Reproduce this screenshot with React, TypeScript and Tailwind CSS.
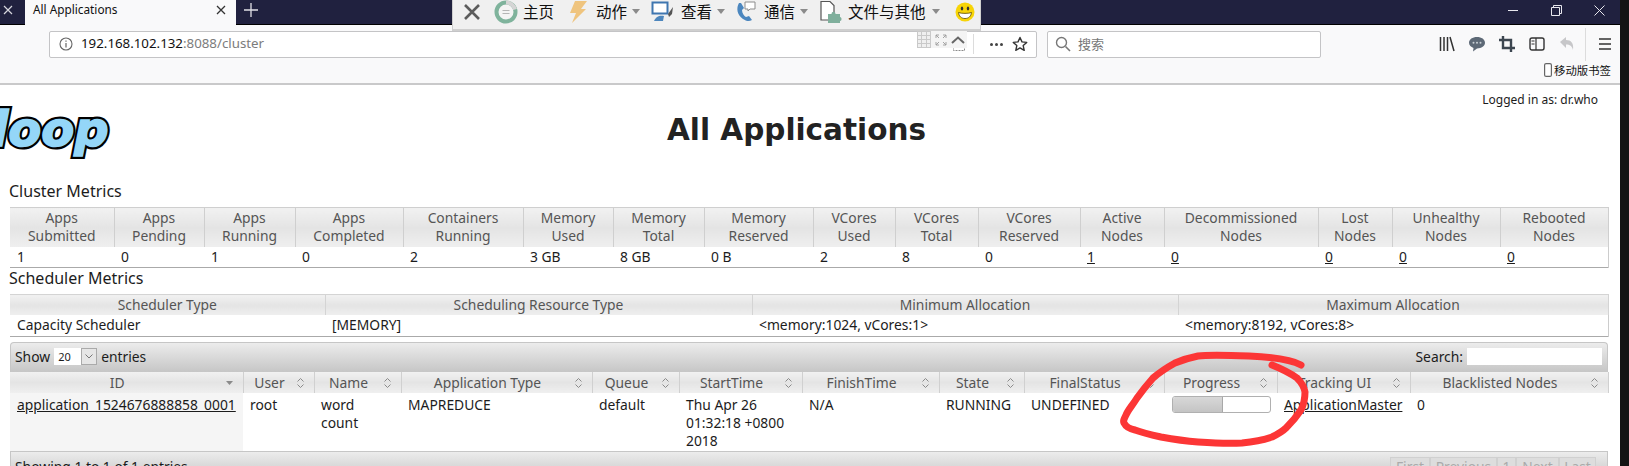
import React from "react";

const clusterCols = [
  ["Apps", "Submitted", "1", "w-[104px]"],
  ["Apps", "Pending", "0", "w-[90px]"],
  ["Apps", "Running", "1", "w-[91px]"],
  ["Apps", "Completed", "0", "w-[108px]"],
  ["Containers", "Running", "2", "w-[120px]"],
  ["Memory", "Used", "3 GB", "w-[90px]"],
  ["Memory", "Total", "8 GB", "w-[91px]"],
  ["Memory", "Reserved", "0 B", "w-[109px]"],
  ["VCores", "Used", "2", "w-[82px]"],
  ["VCores", "Total", "8", "w-[83px]"],
  ["VCores", "Reserved", "0", "w-[102px]"],
  ["Active", "Nodes", "1", "w-[84px]", "u"],
  ["Decommissioned", "Nodes", "0", "w-[154px]", "u"],
  ["Lost", "Nodes", "0", "w-[74px]", "u"],
  ["Unhealthy", "Nodes", "0", "w-[108px]", "u"],
  ["Rebooted", "Nodes", "0", "w-[108px]", "u"],
];

const schedCols = [
  ["Scheduler Type", "Capacity Scheduler", "w-[315px]"],
  ["Scheduling Resource Type", "[MEMORY]", "w-[427px]"],
  ["Minimum Allocation", "<memory:1024, vCores:1>", "w-[426px]"],
  ["Maximum Allocation", "<memory:8192, vCores:8>", "w-[430px]"],
];

const appCols = [
  ["ID", "w-[233px]"],
  ["User", "w-[71px]"],
  ["Name", "w-[87px]"],
  ["Application Type", "w-[191px]"],
  ["Queue", "w-[87px]"],
  ["StartTime", "w-[123px]"],
  ["FinishTime", "w-[137px]"],
  ["State", "w-[85px]"],
  ["FinalStatus", "w-[140px]"],
  ["Progress", "w-[113px]"],
  ["Tracking UI", "w-[133px]"],
  ["Blacklisted Nodes", "w-[198px]"],
];

const thBg = "bg-linear-to-b from-[#f1f1f1] via-[#e4e4e4] to-[#efefef]";

function Sort({ down }: { down?: boolean }) {
  if (down)
    return (
      <svg width="9" height="6" viewBox="0 0 9 6" className="shrink-0">
        <path d="M1 1h7L4.500 5z" fill="#8a8a8a" />
      </svg>
    );
  return (
    <svg width="9" height="12" viewBox="0 0 9 12" className="shrink-0">
      <path d="M1.500 4.500L4.500 1.500l3 3M1.500 7.500l3 3 3-3" fill="none" stroke="#8a8a8a" strokeWidth="1" />
    </svg>
  );
}

function Caret() {
  return (
    <svg width="8" height="5" viewBox="0 0 8 5" className="shrink-0">
      <path d="M0 0h8L4 5z" fill="#8b8b8b" />
    </svg>
  );
}

function TopToolbar() {
  return (
    <div className="absolute left-[452px] top-0 flex h-[31px] w-[529px] items-center border-b-2 border-l border-r border-[#cfcfcf] bg-[#f0f0f0] pb-[6px] font-['Noto_Sans_CJK_SC',sans-serif] text-[15.5px] text-[#111]">
      <svg width="20" height="20" viewBox="0 0 20 20" className="ml-[9px]">
        <path d="M3 3l14 14M17 3L3 17" stroke="#5c5c5c" strokeWidth="2.6" />
      </svg>
      <svg width="24" height="24" viewBox="0 0 24 24" className="ml-[12px]">
        <circle cx="12" cy="12" r="9.500" fill="#f4f4f4" stroke="#7fb39c" strokeWidth="4" />
        <path d="M12 2.500a9.500 9.500 0 0 1 9 7" fill="none" stroke="#d5d5d5" strokeWidth="4" />
        <path d="M8.500 10.500h7M8.500 13.500h7" stroke="#b5b5b5" strokeWidth="1" />
      </svg>
      <span className="ml-[5px] w-[32px]">主页</span>
      <svg width="20" height="24" viewBox="0 0 20 24" className="ml-[13px]">
        <path d="M7 1h12l-6 8h5L4 23l4-10H2z" fill="#efc47e" />
      </svg>
      <span className="ml-[8px] w-[32px]">动作</span>
      <span className="ml-[4px]"><Caret /></span>
      <svg width="24" height="22" viewBox="0 0 24 22" className="ml-[11px]">
        <rect x="1.500" y="1.500" width="15" height="11" fill="#fff" stroke="#3f76b0" strokeWidth="2" />
        <path d="M3 20c2-5 6-6 10-5l-1 5z" fill="#4d86bd" />
        <path d="M17 13l5-7-1 7-3 3z" fill="#555" />
      </svg>
      <span className="ml-[6px] w-[32px]">查看</span>
      <span className="ml-[4px]"><Caret /></span>
      <svg width="24" height="24" viewBox="0 0 24 24" className="ml-[9px]">
        <path d="M5 3c-3 5-2 12 4 16 3 2 6 3 9 1l-3-4-3 1c-2-1-4-4-4-7l2-2-3-5z" fill="#4c87bf" />
        <path d="M11 2h10v7h-5l-2 2V9h-3z" fill="#fff" stroke="#8c8c8c" />
      </svg>
      <span className="ml-[6px] w-[32px]">通信</span>
      <span className="ml-[4px]"><Caret /></span>
      <svg width="24" height="24" viewBox="0 0 24 24" className="ml-[11px]">
        <path d="M2 1.500h9l4 4V20H2z" fill="#fff" stroke="#555" strokeWidth="1.2" />
        <path d="M9 14h3.500c0-3 4-3 4 0H21v3c2 0 2 4 0 4v2H9z" fill="#7faf9c" />
      </svg>
      <span className="ml-[5px] w-[80px]">文件与其他</span>
      <span className="ml-[4px]"><Caret /></span>
      <svg width="20" height="20" viewBox="0 0 20 20" className="ml-[15px]">
        <circle cx="10" cy="10" r="9.500" fill="#f7d407" />
        <ellipse cx="7" cy="6.500" rx="1.200" ry="2" fill="#333" />
        <ellipse cx="13" cy="6.500" rx="1.200" ry="2" fill="#333" />
        <path d="M3.500 10.500c3 1.200 10 1.200 13 0-.5 4-3 6-6.500 6s-6-2-6.500-6z" fill="#fff" stroke="#5a4a00" strokeWidth="0.8" />
      </svg>
    </div>
  );
}

function MiniBar() {
  return (
    <div className="absolute left-[917px] top-[31px] flex h-[17px] w-[50px] items-center bg-[#f4f4f4]">
      <div className="grid h-[17px] w-[14px] grid-cols-3 gap-[1px] bg-[#c9c9c9] p-[1px]">
        {Array.from({ length: 12 }).map((_, i) => (
          <div key={i} className="bg-[#efefef]" />
        ))}
      </div>
      <svg width="12" height="12" viewBox="0 0 12 12" className="ml-[4px]">
        <path d="M1 4V1h3M8 1h3v3M11 8v3H8M4 11H1V8M1 1l3 3M11 1L8 4M11 11L8 8M1 11l3-3" fill="none" stroke="#9a9a9a" strokeWidth="0.9" />
      </svg>
      <svg width="14" height="8" viewBox="0 0 14 8" className="ml-[4px]">
        <path d="M1 7l6-5.500L13 7" fill="none" stroke="#666" strokeWidth="2" />
      </svg>
    </div>
  );
}

function Chrome() {
  return (
    <>
      <div className="flex h-[25px] shrink-0 items-center border-b border-black bg-[#20213f] pb-[4px] font-['Noto_Sans',sans-serif] text-[#e8e8ee]">
        <svg width="10" height="10" viewBox="0 0 10 10" className="ml-[3px]">
          <path d="M1 1l8 8M9 1L1 9" stroke="#d6d6dd" strokeWidth="1.2" />
        </svg>
        <div className="-mb-[4px] ml-[12px] flex h-[25px] w-[211px] items-center bg-[#f9f9fa] pb-[4px] pl-[8px] text-[11.8px] text-[#111]">
          <span>All Applications</span>
          <svg width="10" height="10" viewBox="0 0 10 10" className="ml-auto mr-[10px]">
            <path d="M1 1l8 8M9 1L1 9" stroke="#333" strokeWidth="1.3" />
          </svg>
        </div>
        <svg width="14" height="14" viewBox="0 0 14 14" className="ml-[8px]">
          <path d="M7 0v14M0 7h14" stroke="#e0e0e6" strokeWidth="1.3" />
        </svg>
        <div className="ml-auto flex items-center">
          <svg width="10" height="10" viewBox="0 0 10 10">
            <path d="M0 5.500h10" stroke="#e8e8ee" />
          </svg>
          <svg width="11" height="11" viewBox="0 0 11 11" className="ml-[33px]">
            <path d="M.5 2.500h8v8h-8zM2.500 2.500V.5h8v8h-2" fill="none" stroke="#e8e8ee" />
          </svg>
          <svg width="11" height="11" viewBox="0 0 11 11" className="ml-[32px] mr-[15px]">
            <path d="M.5.5l10 10M10.500.5l-10 10" stroke="#e8e8ee" />
          </svg>
        </div>
      </div>
      <div className="flex h-[60px] shrink-0 flex-col border-b-2 border-[#c9c9ca] bg-[#f9f9fa]">
        <div className="flex h-[37px] items-center pt-[1px]">
          <div className="ml-[49px] flex h-[27px] w-[988px] items-center rounded-[2px] border border-[#c4c4c6] bg-white font-['Noto_Sans',sans-serif] text-[13.3px]">
            <svg width="14" height="14" viewBox="0 0 14 14" className="ml-[9px]">
              <circle cx="7" cy="7" r="6" fill="none" stroke="#666" strokeWidth="1.1" />
              <path d="M7 6v4.500M7 3.400v1.400" stroke="#666" strokeWidth="1.2" />
            </svg>
            <span className="ml-[8px] text-[#111]">192.168.102.132</span>
            <span className="text-[#7c7c7c]">:8088/cluster</span>
            <div className="ml-auto mr-[8px] flex items-center">
              <svg width="12" height="13" viewBox="0 0 12 13" className="mr-[8px]">
                <path d="M.5.5h11v12H.5z" fill="none" stroke="#8a8a8a" strokeDasharray="2 1" />
              </svg>
              <div className="mr-[16px] h-[20px] w-[1px] bg-[#dcdcdc]" />
              <span className="flex gap-[2px]">
                <span className="h-[3px] w-[3px] rounded-full bg-[#444]" />
                <span className="h-[3px] w-[3px] rounded-full bg-[#444]" />
                <span className="h-[3px] w-[3px] rounded-full bg-[#444]" />
              </span>
              <svg width="16" height="16" viewBox="0 0 16 16" className="ml-[9px]">
                <path d="M8 1.500l2 4.400 4.700.5-3.500 3.200 1 4.700L8 11.900l-4.200 2.400 1-4.700L1.300 6.400 6 5.900z" fill="none" stroke="#333" strokeWidth="1.4" strokeLinejoin="round" />
              </svg>
            </div>
          </div>
          <div className="ml-[10px] flex h-[27px] w-[274px] items-center rounded-[2px] border border-[#c4c4c6] bg-white font-['Noto_Sans_CJK_SC',sans-serif] text-[13px] text-[#777]">
            <svg width="16" height="16" viewBox="0 0 16 16" className="ml-[7px]">
              <circle cx="6.500" cy="6.500" r="5" fill="none" stroke="#777" strokeWidth="1.4" />
              <path d="M10.500 10.500L15 15" stroke="#777" strokeWidth="1.6" />
            </svg>
            <span className="ml-[7px]">搜索</span>
          </div>
          <svg width="16" height="16" viewBox="0 0 16 16" className="ml-[118px]">
            <path d="M1.500 1v14M5 1v14M8.500 1v14M11 1l4 14" stroke="#333" strokeWidth="1.5" fill="none" />
          </svg>
          <svg width="18" height="16" viewBox="0 0 18 16" className="ml-[13px]">
            <path d="M9 1c4.500 0 8 2.400 8 5.700s-3.500 5.700-8 5.700l-4 3 .5-3.500C3 11 1 9 1 6.700 1 3.400 4.500 1 9 1z" fill="#5d6976" />
            <circle cx="5.500" cy="6.700" r="1" fill="#c8ced4" />
            <circle cx="9" cy="6.700" r="1" fill="#c8ced4" />
            <circle cx="12.500" cy="6.700" r="1" fill="#c8ced4" />
          </svg>
          <svg width="16" height="16" viewBox="0 0 16 16" className="ml-[13px]">
            <path d="M4 0v12h12M0 4h12v12" fill="none" stroke="#3c4650" strokeWidth="2.4" />
          </svg>
          <svg width="16" height="16" viewBox="0 0 16 16" className="ml-[14px]">
            <rect x="1" y="2" width="14" height="12" rx="2" fill="none" stroke="#333" strokeWidth="1.4" />
            <path d="M7 2v12M2.500 5h3M2.500 8h3" stroke="#333" strokeWidth="1.2" />
          </svg>
          <svg width="16" height="16" viewBox="0 0 16 16" className="ml-[14px]">
            <path d="M1 6l6-5v3c5 0 8 3 7 10-1-4-3-5.500-7-5.500V12z" fill="#c7c7c9" />
          </svg>
          <div className="ml-[10px] h-[33px] w-[1px] bg-[#dcdcdc]" />
          <svg width="14" height="14" viewBox="0 0 14 14" className="ml-[12px]">
            <path d="M1 2h12M1 7h12M1 12h12" stroke="#333" strokeWidth="1.6" />
          </svg>
        </div>
        <div className="flex flex-1 items-start justify-end pr-[9px] font-['Noto_Sans_CJK_SC',sans-serif] text-[11.4px] leading-[17px] text-[#111]">
          <svg width="8" height="14" viewBox="0 0 8 14" className="mr-[2px] mt-[1px]">
            <rect x=".6" y=".6" width="6.800" height="12.800" rx="1.500" fill="#fff" stroke="#666" strokeWidth="1.2" />
          </svg>
          <span>移动版书签</span>
        </div>
      </div>
    </>
  );
}

function Page() {
  return (
    <div className="flex-1 overflow-hidden bg-white font-['Noto_Sans',sans-serif] text-[13.850px] leading-[18px] text-[#1c1c1c]">
      <div className="flex h-[97px] items-start">
        <svg width="114" height="80" viewBox="0 0 114 80" className="shrink-0">
          <g fontFamily="'DejaVu Sans', sans-serif" fontWeight="bold" fontStyle="italic" fontSize="48">
            <text x="-26" y="61" fill="#000" stroke="#000" strokeWidth="6" strokeLinejoin="miter">
              doop
            </text>
            <text x="-26" y="61" fill="#94d6f8" stroke="#94d6f8" strokeWidth="1.6" strokeLinejoin="miter">
              doop
            </text>
          </g>
        </svg>
        <h1 className="ml-[553px] mt-[25px] font-['DejaVu_Sans',sans-serif] text-[29.500px] font-bold leading-[40px] text-[#222]">
          All Applications
        </h1>
        <span className="ml-auto mr-[22px] mt-[6px] text-[12px] leading-[18px]">Logged in as: dr.who</span>
      </div>
      <div className="px-[10px]">
        <h3 className="-ml-[1px] h-[25px] text-[16px] leading-[19px]">Cluster Metrics</h3>
        <table className="w-[1598px] table-fixed border-collapse border-b border-[#aaa]">
          <thead>
            <tr className="h-[39px]">
              {clusterCols.map((c, i) => (
                <th key={i} className={`${c[3]} ${thBg} border-r border-t border-[#cfcfcf] p-0 text-center font-normal text-[#555]`}>
                  {c[0]}
                  <br />
                  {c[1]}
                </th>
              ))}
            </tr>
          </thead>
          <tbody>
            <tr className="h-[21px]">
              {clusterCols.map((c, i) => (
                <td key={i} className={`px-[7px] py-0 ${i === 15 ? "border-r border-[#ccc]" : ""} ${c[4] ? "underline" : ""}`}>
                  {c[2]}
                </td>
              ))}
            </tr>
          </tbody>
        </table>
        <h3 className="-ml-[1px] h-[26px] text-[16px] leading-[20px]">Scheduler Metrics</h3>
        <table className="w-[1598px] table-fixed border-collapse border-b border-[#aaa]">
          <thead>
            <tr className="h-[20px]">
              {schedCols.map((c, i) => (
                <th key={i} className={`${c[2]} ${thBg} border-r border-t border-[#d4d4d4] p-0 text-center font-normal text-[#555]`}>
                  {c[0]}
                </th>
              ))}
            </tr>
          </thead>
          <tbody>
            <tr className="h-[22px]">
              {schedCols.map((c, i) => (
                <td key={i} className={`px-[7px] py-0 ${i === 3 ? "border-r border-[#ccc]" : ""}`}>
                  {c[1]}
                </td>
              ))}
            </tr>
          </tbody>
        </table>
        <div className="mt-[5px] w-[1598px]">
          <div className="flex h-[30px] items-center rounded-t-[4px] border border-b-0 border-[#c6c6c6] bg-linear-to-b from-[#ececec] to-[#c6c6c6] pb-[2px] pl-[4px] pr-[5px]">
            <span>Show</span>
            <div className="ml-[4px] flex h-[17px] w-[43px] bg-white text-[11px] leading-[17px]">
              <span className="w-[27px] pl-[4px]">20</span>
              <span className="flex w-[16px] items-center justify-center border border-[#aaa] bg-[#e6e6e6]">
                <svg width="8" height="5" viewBox="0 0 8 5">
                  <path d="M.5.5L4 4 7.500.5" fill="none" stroke="#777" />
                </svg>
              </span>
            </div>
            <span className="ml-[4px]">entries</span>
            <span className="ml-auto">Search:</span>
            <div className="ml-[4px] h-[17px] w-[135px] bg-white" />
          </div>
          <table className="w-[1598px] table-fixed border-collapse">
            <thead>
              <tr className="h-[21px]">
                {appCols.map((c, i) => (
                  <th key={i} className={`${c[1]} ${thBg} border-r border-[#d0d0d0] p-0 font-normal text-[#555]`}>
                    <div className="flex items-center pr-[9px]">
                      <span className="flex-1 text-center">{c[0]}</span>
                      <Sort down={i === 0} />
                    </div>
                  </th>
                ))}
              </tr>
            </thead>
            <tbody>
              <tr className="h-[58px] align-top">
                <td className="bg-[#f5f5f5] px-[7px] pb-0 pt-[3px]">
                  <span className="underline">application_1524676888858_0001</span>
                </td>
                <td className="px-[7px] pb-0 pt-[3px]">root</td>
                <td className="px-[7px] pb-0 pt-[3px]">
                  word
                  <br />
                  count
                </td>
                <td className="px-[7px] pb-0 pt-[3px]">MAPREDUCE</td>
                <td className="px-[7px] pb-0 pt-[3px]">default</td>
                <td className="px-[7px] pb-0 pt-[3px]">
                  Thu Apr 26
                  <br />
                  01:32:18 +0800
                  <br />
                  2018
                </td>
                <td className="px-[7px] pb-0 pt-[3px]">N/A</td>
                <td className="px-[7px] pb-0 pt-[3px]">RUNNING</td>
                <td className="px-[7px] pb-0 pt-[3px]">UNDEFINED</td>
                <td className="pb-0 pl-[8px] pr-[6px] pt-[3px]">
                  <div className="h-[17px] w-[99px] overflow-hidden rounded-[3px] border border-[#b0b0b0] bg-white">
                    <div className="h-full w-[50px] border-r border-[#a8a8a8] bg-linear-to-b from-[#d8d8d8] to-[#c4c4c4]" />
                  </div>
                </td>
                <td className="px-[7px] pb-0 pt-[3px]">
                  <span className="underline">ApplicationMaster</span>
                </td>
                <td className="px-[7px] pb-0 pt-[3px]">0</td>
              </tr>
            </tbody>
          </table>
          <div className="flex h-[30px] border border-[#c6c6c6] bg-linear-to-b from-[#ececec] to-[#c6c6c6] pl-[4px] pr-[11px]">
            <span className="mt-[6px]">Showing 1 to 1 of 1 entries</span>
            <div className="ml-auto mt-[5px] flex h-[24px] rounded-[3px] bg-[#dddddd] text-[#aaa]">
              <span className="w-[40px] border border-[#d0d0d0] text-center">First</span>
              <span className="w-[67px] border border-[#d0d0d0] text-center">Previous</span>
              <span className="w-[19px] border border-[#d0d0d0] text-center">1</span>
              <span className="w-[43px] border border-[#d0d0d0] text-center">Next</span>
              <span className="w-[37px] border border-[#d0d0d0] text-center">Last</span>
            </div>
          </div>
        </div>
      </div>
    </div>
  );
}

export default function App() {
  return (
    <div className="relative flex h-[466px] w-[1629px] overflow-hidden bg-[#141414]">
      <div className="relative flex h-[466px] w-[1620px] flex-col overflow-hidden">
        <Chrome />
        <Page />
        <TopToolbar />
        <MiniBar />
        <svg width="1620" height="466" viewBox="0 0 1620 466" className="pointer-events-none absolute left-0 top-0">
          <path
            d="M1301 365C1290 359 1270 357 1249 356C1225 355 1205 355 1198 356C1188 358 1182 360 1175 363C1166 368 1160 372 1153 378C1146 386 1142 391 1137 398C1132 406 1128 410 1126 415C1124 419 1123 421 1124 423C1126 427 1130 429 1135 430C1143 433 1152 435 1161 437C1172 439 1185 441 1198 442C1212 443 1228 444 1242 443C1252 442 1263 440 1272 437C1278 434 1282 432 1286 428C1292 422 1297 416 1301 410C1304 404 1305 398 1305 392C1304 386 1301 382 1297 378C1290 373 1282 369 1272 365"
            fill="none"
            stroke="#fc3636"
            strokeWidth="7"
            strokeLinecap="round"
          />
        </svg>
      </div>
    </div>
  );
}
